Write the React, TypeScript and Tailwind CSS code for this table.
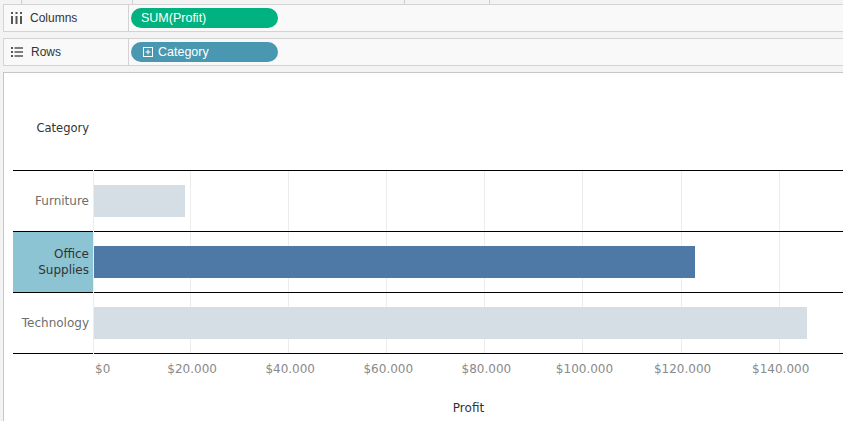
const PX_PER_DOLLAR = 98.1 / 20000;

const rows = [
  { name: ["Furniture"], value: 18451, selected: false },
  { name: ["Office", "Supplies"], value: 122490, selected: true },
  { name: ["Technology"], value: 145455, selected: false },
];

const ticks = [0, 20000, 40000, 60000, 80000, 100000, 120000, 140000];

const fmt = (v: number) => "$" + (v === 0 ? "0" : v.toLocaleString("de-DE"));

const ColumnsIcon = () => (
  <svg width="11" height="12" viewBox="0 0 11 12" className="shrink-0">
    <g fill="#555">
      <rect x="0" y="0" width="2" height="2" />
      <rect x="4.5" y="0" width="2" height="2" />
      <rect x="9" y="0" width="2" height="2" />
      <rect x="0" y="4" width="2" height="8" />
      <rect x="4.5" y="4" width="2" height="8" />
      <rect x="9" y="4" width="2" height="8" />
    </g>
  </svg>
);

const RowsIcon = () => (
  <svg width="12" height="10" viewBox="0 0 12 10" className="shrink-0">
    <g fill="#555">
      <rect x="0" y="0" width="2" height="2" />
      <rect x="3.5" y="0.25" width="8.5" height="1.5" />
      <rect x="0" y="4" width="2" height="2" />
      <rect x="3.5" y="4.25" width="8.5" height="1.5" />
      <rect x="0" y="8" width="2" height="2" />
      <rect x="3.5" y="8.25" width="8.5" height="1.5" />
    </g>
  </svg>
);

const PlusBox = () => (
  <svg width="10" height="10" viewBox="0 0 10 10" className="shrink-0">
    <rect x="0.5" y="0.5" width="9" height="9" fill="none" stroke="#fff" strokeWidth="1" />
    <path d="M5 2.5v5M2.5 5h5" stroke="#fff" strokeWidth="1" />
  </svg>
);

const Shelf = ({ icon, label, children }: { icon: React.ReactNode; label: string; children: React.ReactNode }) => (
  <div className="ml-[3px] flex h-[28px] border-y border-l border-[#d3d3d3] bg-[#f9f9f9]">
    <div className="flex w-[125px] items-center gap-[8px] border-r border-[#d3d3d3] pl-[7px] text-[12px] text-[#333]">
      {icon}
      <span>{label}</span>
    </div>
    <div className="flex items-center pl-[2px]">{children}</div>
  </div>
);

export default function App() {
  return (
    <div className="flex h-[421px] w-[843px] flex-col overflow-hidden bg-[#f3f3f3] font-['Liberation_Sans',Arial,sans-serif]">
      {/* top strip */}
      <div className="flex h-[4px] shrink-0">
        <div className="w-[22px] border-r border-[#cfcfcf]" />
        <div className="w-[111px] border-r border-[#cfcfcf]" />
        <div className="w-[272px] border-r border-[#cfcfcf]" />
        <div className="w-[85px] border-r border-[#cfcfcf]" />
      </div>

      <Shelf icon={<ColumnsIcon />} label="Columns">
        <div className="flex h-[20px] w-[147px] items-center rounded-full bg-[#00b27f] pl-[10px] text-[12.5px] text-white">
          SUM(Profit)
        </div>
      </Shelf>

      <div className="h-[6px] shrink-0" />

      <Shelf icon={<RowsIcon />} label="Rows">
        <div className="flex h-[20px] w-[147px] items-center gap-[5px] rounded-full bg-[#4a97b2] pl-[12px] text-[12.5px] text-white">
          <PlusBox />
          Category
        </div>
      </Shelf>

      <div className="h-[6px] shrink-0" />

      {/* view */}
      <div className="ml-[3px] flex-1 border-l border-t border-[#c6c6c6] bg-white pl-[9px] font-['DejaVu_Sans',Verdana,sans-serif] text-[12px]">
        {/* header */}
        <div className="flex h-[97px] items-end pb-[33px]">
          <div className="w-[80px] pr-[4px] text-right text-[11.5px] text-[#333]">Category</div>
        </div>

        {/* table */}
        <div className="flex">
          <div className="w-[80px] border-t border-black">
            {rows.map((r) => (
              <div
                key={r.name.join(" ")}
                className={`flex h-[61px] flex-col items-end justify-center border-b border-black pr-[4px] text-right leading-[16px] ${
                  r.selected ? "bg-[#8dc4d3] text-[#333]" : "text-[#6e6e6e]"
                }`}
              >
                {r.name.map((n) => (
                  <span key={n}>{n}</span>
                ))}
              </div>
            ))}
          </div>
          <div className="relative flex-1 border-l border-[#ececec]">
            <svg className="absolute inset-0 h-full w-full" aria-hidden>
              {ticks.slice(1).map((t) => (
                <line
                  key={t}
                  x1={Math.round(t * PX_PER_DOLLAR) - 1.5}
                  x2={Math.round(t * PX_PER_DOLLAR) - 1.5}
                  y1="0"
                  y2="100%"
                  stroke="#ececec"
                  strokeWidth="1"
                />
              ))}
            </svg>
            <div className="relative border-t border-black">
              {rows.map((r) => (
                <div key={r.name.join(" ")} className="h-[61px] border-b border-black pt-[14px]">
                  <div
                    className={`h-[32px] ${r.selected ? "bg-[#4e79a7]" : "bg-[#d5dde5]"}`}
                    style={{ width: `${r.value * PX_PER_DOLLAR}px` }}
                  />
                </div>
              ))}
            </div>
          </div>
        </div>

        {/* axis */}
        <div className="flex">
          <div className="w-[81px]" />
          <div className="flex-1">
            <div className="relative h-[29px] text-[#8a8a8a]">
              {ticks.map((t, i) => (
                <span
                  key={t}
                  className={`absolute top-[6px] whitespace-nowrap ${i === 0 ? "" : "-translate-x-1/2"}`}
                  style={{ left: `${i === 0 ? 1 : t * PX_PER_DOLLAR}px` }}
                >
                  {fmt(t)}
                </span>
              ))}
            </div>
            <div className="pt-[16px] text-center text-[12px] text-[#333]">Profit</div>
          </div>
        </div>
      </div>
    </div>
  );
}
